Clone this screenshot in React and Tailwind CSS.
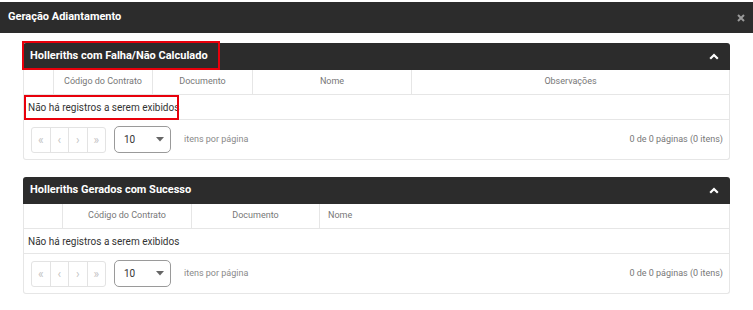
import React from 'react';

const ChevronUp = () => (
  <svg width="10" height="7" viewBox="0 0 10 7" className="block">
    <path d="M1.2 5.8 L5 2 L8.8 5.8" fill="none" stroke="#fff" strokeWidth="2.2" />
  </svg>
);

const Pager = () => (
  <div className="flex h-[26px] w-[75px] rounded-[3px] border border-[#e3e3e3] text-[12px] text-[#c4c4c4]">
    <span className="flex flex-1 items-center justify-center border-r border-[#e3e3e3]">«</span>
    <span className="flex flex-1 items-center justify-center border-r border-[#e3e3e3]">‹</span>
    <span className="flex flex-1 items-center justify-center border-r border-[#e3e3e3]">›</span>
    <span className="flex flex-1 items-center justify-center">»</span>
  </div>
);

const Footer = () => (
  <div className="flex h-[40px] items-center border border-t-0 border-[#e6e6e6] rounded-b-[3px] pl-[7px] pr-[6px]">
    <Pager />
    <div className="ml-[8px] flex h-[27px] w-[57px] items-center justify-between rounded-[5px] border border-[#9a9a9a] pl-[9px] pr-[6px] text-[10px] text-[#333]">
      <span>10</span>
      <svg width="8" height="5" viewBox="0 0 8 5"><path d="M0 0 H8 L4 4.5 Z" fill="#666" /></svg>
    </div>
    <span className="ml-[13px] text-[9px] text-[#8a8a8a]">itens por página</span>
    <span className="ml-auto text-[9px] text-[#777]">0 de 0 páginas (0 itens)</span>
  </div>
);

const Panel = ({ title, columns, highlight }) => (
  <div className="w-[707px]">
    <div className="relative flex h-[27px] items-center justify-between rounded-t-[3px] bg-[#2c2c2c] pl-[7px] pr-[11px]">
      <span className="text-[11px] font-bold text-white">{title}</span>
      <ChevronUp />
      {highlight && (
        <div className="absolute left-[-1px] top-[-2px] h-[29px] w-[198px] border-2 border-[#e8000b]" />
      )}
    </div>
    <div className="flex h-[25px] border-x border-b border-[#e6e6e6] text-[9px] text-[#777]">
      {columns.map((c, i) => (
        <div
          key={i}
          className={`flex items-center ${c.left ? 'justify-start pl-[8px]' : 'justify-center'} ${i < columns.length - 1 ? 'border-r border-[#e6e6e6]' : ''}`}
          style={{ width: c.w, flexGrow: c.grow ? 1 : 0 }}
        >
          {c.label}
        </div>
      ))}
    </div>
    <div className="relative flex h-[25px] items-center border-x border-b border-[#e6e6e6] pl-[4px] text-[10px] text-[#333]">
      Não há registros a serem exibidos
      {highlight && (
        <div className="absolute left-0 top-0 h-[25px] w-[155px] border-2 border-[#e8000b]" />
      )}
    </div>
    <Footer />
  </div>
);

export default function App() {
  return (
    <div className="h-[310px] w-[753px] bg-white pt-[2px] font-['Roboto',sans-serif]">
      <div className="flex h-[31px] items-center justify-between bg-[#2c2c2c] pl-[8px] pr-[8px]">
        <span className="text-[11px] font-bold text-white">Geração Adiantamento</span>
        <svg width="8" height="8" viewBox="0 0 8 8">
          <path d="M1 1 L7 7 M7 1 L1 7" stroke="#9a9a9a" strokeWidth="2" />
        </svg>
      </div>
      <div className="flex flex-col gap-[17px] pl-[23px] pt-[10px]">
        <Panel
          title="Holleriths com Falha/Não Calculado"
          highlight
          columns={[
            { label: '', w: 30 },
            { label: 'Código do Contrato', w: 99 },
            { label: 'Documento', w: 100 },
            { label: 'Nome', w: 159 },
            { label: 'Observações', grow: true },
          ]}
        />
        <Panel
          title="Holleriths Gerados com Sucesso"
          columns={[
            { label: '', w: 39 },
            { label: 'Código do Contrato', w: 129 },
            { label: 'Documento', w: 128 },
            { label: 'Nome', left: true, grow: true },
          ]}
        />
      </div>
    </div>
  );
}
